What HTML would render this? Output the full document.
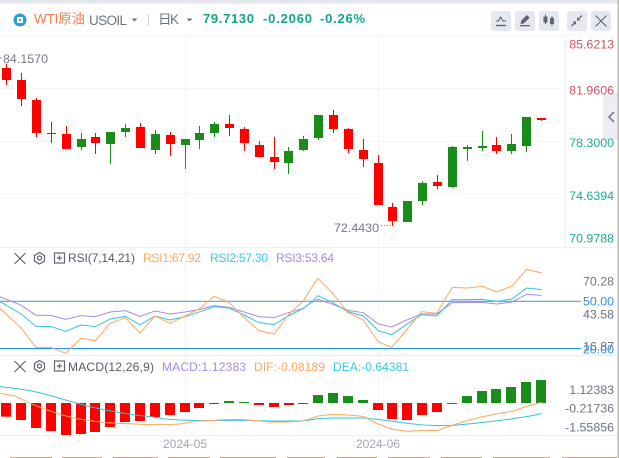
<!DOCTYPE html>
<html><head><meta charset="utf-8"><style>
html,body{margin:0;padding:0;background:#fff;width:619px;height:458px;overflow:hidden}
svg{display:block;font-family:"Liberation Sans","Noto Sans CJK SC",sans-serif}
.g line{stroke:#1a8c1a;stroke-width:1}.g rect{fill:#1a8c1a}
.r line{stroke:#ff0000;stroke-width:1}.r rect{fill:#ff0000}
.ax{font-size:12.4px;text-anchor:end}
.z{vector-effect:non-scaling-stroke;fill:none}
</style></head><body>
<svg width="619" height="458" viewBox="0 0 619 458">
<rect width="619" height="458" fill="#fff"/>
<rect width="619" height="3.5" fill="#e3e7ed"/>
<rect x="617.5" width="1.5" height="458" fill="#b9b6b2"/>
<!-- grid -->
<g stroke="#f4f5f8" stroke-width="1">
<line x1="0" y1="35.5" x2="617" y2="35.5"/>
<line x1="185.5" y1="36" x2="185.5" y2="435"/><line x1="378.5" y1="36" x2="378.5" y2="435"/>
<line x1="0" y1="88.5" x2="565" y2="88.5"/><line x1="0" y1="141.5" x2="565" y2="141.5"/><line x1="0" y1="193.5" x2="565" y2="193.5"/>
</g>
<g stroke="#eef0f3" stroke-width="1">
<line x1="0" y1="247.5" x2="617" y2="247.5"/><line x1="0" y1="355.5" x2="617" y2="355.5"/><line x1="0" y1="435.5" x2="617" y2="435.5"/>
<line x1="565.5" y1="36" x2="565.5" y2="247"/>
</g>
<!-- header -->
<circle cx="20" cy="20" r="6.5" fill="#2b9fc7"/><rect x="17" y="17" width="6" height="6" rx="1" fill="#fff"/><rect x="19" y="19" width="2" height="2" fill="#2b9fc7"/>
<text x="34" y="23.5" font-size="13.5" fill="#ff7a50" textLength="51">WTI原油</text>
<text x="89" y="25" font-size="13.5" fill="#6b7280" textLength="38">USOIL</text>
<path d="M131.500 18.500h6l-3 3z" fill="#6b7280"/>
<rect x="148" y="14" width="1" height="12" fill="#c9ccd4"/>
<text x="158" y="24" font-size="13.500" fill="#6b7280" textLength="21">日K</text>
<path d="M186.500 18.500h6l-3 3z" fill="#6b7280"/>
<g font-size="13" font-weight="bold" fill="#10a58a">
<text x="203" y="23" textLength="51">79.7130</text>
<text x="263" y="23" textLength="49">-0.2060</text>
<text x="320" y="23" textLength="45">-0.26%</text>
</g>
<g fill="#e5e8ef">
<rect x="491" y="11" width="20" height="20" rx="3"/><rect x="515" y="11" width="20" height="20" rx="3"/><rect x="539" y="11" width="20" height="20" rx="3"/><rect x="567" y="11" width="20" height="20" rx="3"/><rect x="591" y="11" width="20" height="20" rx="3"/>
</g>
<!-- toolbar icons -->
<g stroke="#5f6470" fill="none">
<path d="M496 25.500h10" stroke-width="1.400"/>
<path d="M496 21h2.500l2-3.800 2.500 3.800h3" stroke-width="1.100"/>
<path d="M595.500 15.500l11 11M606.500 15.500l-11 11" stroke-width="1.100"/>
<path d="M571.500 26l3-3M582 15.500l-3 3" stroke-width="1.300"/>
</g>
<g fill="#5f6470">
<path d="M576 21.500v3.500l-3.500-3.500zM577 20.500v-3.500l3.500 3.500z"/>
<path d="M520.500 24l.8-3.500 5.700-5.500 2.700 2.700-5.700 5.700z"/>
<rect x="520" y="25" width="10" height="1.300"/>
<rect x="543.500" y="16.500" width="4" height="6"/><rect x="545" y="14.500" width="1" height="9.500"/>
<rect x="550" y="18" width="4" height="6"/><rect x="551.500" y="16" width="1" height="10"/>
</g>
<!-- side handle -->
<rect x="603" y="93" width="14.500" height="47" fill="#eceef3"/>
<path d="M614 112l-5 5 5 5" fill="none" stroke="#6b7280" stroke-width="1.500"/>
<!-- candles -->
<g class="r">
<line x1="6.500" y1="64" x2="6.500" y2="85"/><rect x="2" y="68" width="9" height="12"/>
<line x1="21.500" y1="73" x2="21.500" y2="106"/><rect x="17" y="80" width="9" height="19"/>
<line x1="36.500" y1="98" x2="36.500" y2="137"/><rect x="32" y="100" width="9" height="33"/>
<line x1="51.500" y1="122" x2="51.500" y2="143"/><rect x="47" y="133" width="9" height="1"/>
<line x1="66.500" y1="126" x2="66.500" y2="149"/><rect x="62" y="134" width="9" height="15"/>
<line x1="95.500" y1="133" x2="95.500" y2="154"/><rect x="91" y="137" width="9" height="6"/>
<line x1="140.500" y1="123" x2="140.500" y2="148"/><rect x="136" y="127" width="9" height="21"/>
<line x1="170.500" y1="132" x2="170.500" y2="156"/><rect x="166" y="135" width="9" height="9"/>
<line x1="229.500" y1="115" x2="229.500" y2="136"/><rect x="225" y="124" width="9" height="4"/>
<line x1="244.500" y1="127" x2="244.500" y2="151"/><rect x="240" y="129" width="9" height="14"/>
<line x1="259.500" y1="141" x2="259.500" y2="157"/><rect x="255" y="145" width="9" height="12"/>
<line x1="274.500" y1="137" x2="274.500" y2="169"/><rect x="270" y="157" width="9" height="5"/>
<line x1="333.500" y1="110" x2="333.500" y2="133"/><rect x="329" y="115" width="9" height="14"/>
<line x1="348.500" y1="128" x2="348.500" y2="153"/><rect x="344" y="129" width="9" height="20"/>
<line x1="363.500" y1="139" x2="363.500" y2="167"/><rect x="359" y="150" width="9" height="9"/>
<line x1="378.500" y1="155" x2="378.500" y2="205"/><rect x="374" y="163" width="9" height="42"/>
<line x1="392.500" y1="203" x2="392.500" y2="226"/><rect x="388" y="207" width="9" height="14"/>
<line x1="437.500" y1="175" x2="437.500" y2="189"/><rect x="433" y="182" width="9" height="4"/>
<line x1="496.500" y1="137" x2="496.500" y2="154"/><rect x="492" y="145" width="9" height="6"/>
<line x1="541.500" y1="118" x2="541.500" y2="121"/><rect x="537" y="118" width="9" height="2"/>
</g>
<g class="g">
<line x1="81.500" y1="133" x2="81.500" y2="150"/><rect x="77" y="139" width="9" height="8"/>
<line x1="110.500" y1="132" x2="110.500" y2="164"/><rect x="106" y="132" width="9" height="12"/>
<line x1="125.500" y1="124" x2="125.500" y2="137"/><rect x="121" y="128" width="9" height="4"/>
<line x1="155.500" y1="130" x2="155.500" y2="154"/><rect x="151" y="134" width="9" height="16"/>
<line x1="185.500" y1="139" x2="185.500" y2="169"/><rect x="181" y="139" width="9" height="6"/>
<line x1="199.500" y1="126" x2="199.500" y2="149"/><rect x="195" y="133" width="9" height="7"/>
<line x1="214.500" y1="122" x2="214.500" y2="137"/><rect x="210" y="124" width="9" height="9"/>
<line x1="288.500" y1="147" x2="288.500" y2="174"/><rect x="284" y="151" width="9" height="12"/>
<line x1="303.500" y1="136" x2="303.500" y2="151"/><rect x="299" y="139" width="9" height="11"/>
<line x1="318.500" y1="115" x2="318.500" y2="140"/><rect x="314" y="115" width="9" height="23"/>
<rect x="403" y="201" width="9" height="21"/>
<line x1="422.500" y1="181" x2="422.500" y2="205"/><rect x="418" y="183" width="9" height="18"/>
<line x1="452.500" y1="146" x2="452.500" y2="188"/><rect x="448" y="147" width="9" height="40"/>
<line x1="467.500" y1="145" x2="467.500" y2="161"/><rect x="463" y="147" width="9" height="2"/>
<line x1="482.500" y1="131" x2="482.500" y2="151"/><rect x="478" y="146" width="9" height="2"/>
<line x1="511.500" y1="134" x2="511.500" y2="154"/><rect x="507" y="144" width="9" height="7"/>
<line x1="526.500" y1="117" x2="526.500" y2="152"/><rect x="522" y="117" width="9" height="29"/>
</g>
<rect x="0.500" y="57" width="1" height="2" fill="#888"/>
<text x="3" y="63" font-size="12.400" fill="#777a85" textLength="45">84.1570</text>
<text x="334" y="232" font-size="12.400" fill="#777a85" textLength="45">72.4430</text>
<line x1="381" y1="225.500" x2="392" y2="225.500" stroke="#888" stroke-width="1" stroke-dasharray="1 2"/>
<!-- axis -->
<g class="ax" fill="#d9505f"><text x="614" y="48.500">85.6213</text><text x="614" y="94.500">81.9606</text></g>
<g class="ax" fill="#1fa88f"><text x="614" y="147">78.3000</text><text x="614" y="200">74.6394</text><text x="614" y="242.500">70.9788</text></g>
<g class="ax" fill="#6b7280"><text x="614" y="285.500">70.28</text><text x="614" y="318.500">43.58</text><text x="614" y="350.500">16.87</text><text x="614" y="394">1.12383</text><text x="614" y="412.500">-0.21736</text><text x="614" y="431.500">-1.55856</text></g>
<g class="ax" fill="#2f8fe8"><text x="614" y="305.500">50.00</text><text x="614" y="353.500">20.00</text></g>
<!-- RSI -->
<g stroke="#5f6470" stroke-width="1.200" fill="none">
<path d="M14.500 253l11 11M25.500 253l-11 11M14.500 361l11 11M25.500 361l-11 11"/>
<path d="M39.500 252.500l5 3v5.500l-5 3-5-3v-5.500z"/><circle cx="39.500" cy="258" r="2"/>
<path d="M39.500 360.500l5 3v5.500l-5 3-5-3v-5.500z"/><circle cx="39.500" cy="366" r="2"/>
<rect x="54.500" y="253" width="10" height="10"/><path d="M57 258h5M59.500 255.500v5"/>
<rect x="54.500" y="361" width="10" height="10"/><path d="M57 366h5M59.500 363.500v5"/>
</g>
<g font-size="12">
<text x="68" y="262" fill="#555a66" textLength="67">RSI(7,14,21)</text>
<text x="143" y="262" fill="#ffa65c" textLength="58">RSI1:67.92</text>
<text x="210" y="262" fill="#3cc8e0" textLength="58">RSI2:57.30</text>
<text x="276" y="262" fill="#a78be8" textLength="58">RSI3:53.64</text>
<text x="68" y="371" fill="#555a66" textLength="86">MACD(12,26,9)</text>
<text x="162" y="371" fill="#a78be8" textLength="84">MACD:1.12383</text>
<text x="254" y="371" fill="#ffa65c" textLength="71">DIF:-0.08189</text>
<text x="333" y="371" fill="#3cc8e0" textLength="76">DEA:-0.64381</text>
</g>
<line x1="0" y1="301.300" x2="581" y2="301.300" stroke="#4aa3ee" stroke-width="1.200"/>
<line x1="0" y1="348.500" x2="581" y2="348.500" stroke="#1e90ff" stroke-width="1"/>
<g transform="translate(0,240) scale(0.33333)">
<polyline class="z" stroke="#a78be8" stroke-width="1" points="0,170 64,196 108,226 152,226 197,238 243,227 286,230 331,216 376,212 420,229 465,213 510,222 555,216 600,208 642,197 687,202 732,216 777,230 822,233 865,218 910,205 930,190 954,178 998,193 1044,211 1090,218 1135,252 1175,261 1220,240 1265,222 1310,222 1357,188 1402,188 1447,187 1490,192 1535,186 1580,163 1625,166"/>
<polyline class="z" stroke="#35c4dc" stroke-width="1" points="0,185 64,222 108,259 152,259 197,274 243,255 286,260 331,237 376,229 420,254 465,228 510,240 555,230 600,215 642,200 687,204 732,225 777,248 822,254 865,228 910,205 930,190 954,167 998,188 1044,215 1090,228 1135,272 1175,284 1220,253 1265,224 1310,228 1357,179 1402,179 1447,178 1490,184 1535,177 1580,144 1625,149"/>
<polyline class="z" stroke="#ffa65c" stroke-width="1" points="0,205 64,265 108,322 152,322 197,340 243,295 286,302 331,250 376,233 420,279 465,228 510,250 555,228 600,205 642,169 687,187 732,232 777,272 822,282 865,225 910,183 930,150 954,115 998,160 1044,218 1090,240 1135,306 1175,322 1220,270 1265,215 1310,220 1357,142 1402,144 1447,139 1490,156 1535,139 1580,88 1625,99"/>
</g>
<!-- MACD bars -->
<g transform="translate(0,350) scale(0.33333)">
<g fill="#ff0000">
<rect x="3" y="159" width="30" height="41"/><rect x="48" y="159" width="30" height="51"/><rect x="93" y="159" width="30" height="75"/><rect x="138" y="159" width="30" height="84"/><rect x="183" y="159" width="30" height="96"/><rect x="228" y="159" width="30" height="93"/><rect x="270" y="159" width="30" height="87"/><rect x="315" y="159" width="30" height="72"/><rect x="360" y="159" width="30" height="57"/><rect x="405" y="159" width="30" height="54"/><rect x="450" y="159" width="30" height="42"/><rect x="495" y="159" width="30" height="36"/><rect x="540" y="159" width="30" height="27"/><rect x="582" y="159" width="30" height="15"/><rect x="627" y="159" width="30" height="3"/><rect x="762" y="159" width="30" height="6"/><rect x="807" y="159" width="30" height="12"/><rect x="852" y="159" width="30" height="6"/>
<rect x="1119" y="159" width="30" height="21"/><rect x="1161" y="159" width="30" height="48"/><rect x="1206" y="159" width="30" height="51"/><rect x="1251" y="159" width="30" height="36"/><rect x="1296" y="159" width="30" height="27"/>
</g>
<g fill="#1a8c1a">
<rect x="672" y="153" width="30" height="6"/><rect x="717" y="156" width="30" height="3"/><rect x="894" y="159" width="30" height="3"/>
<rect x="939" y="135" width="30" height="24"/><rect x="984" y="129" width="30" height="30"/><rect x="1029" y="138" width="30" height="21"/><rect x="1074" y="150" width="30" height="9"/>
<rect x="1341" y="159" width="30" height="3"/><rect x="1386" y="138" width="30" height="21"/><rect x="1431" y="123" width="30" height="36"/><rect x="1473" y="117" width="30" height="42"/><rect x="1518" y="111" width="30" height="48"/><rect x="1563" y="96" width="30" height="63"/><rect x="1608" y="90" width="30" height="69"/>
</g>
<polyline class="z" stroke="#35c4dc" stroke-width="1" points="0,110 45,115 90,122 135,132 180,145 225,158 270,170 315,180 360,188 405,195 450,200 495,207 540,210 585,212 630,212 675,211 720,211 765,212 810,213 855,213 900,213 930,210 954,206 999,204 1044,204 1089,204 1134,208 1179,214 1224,220 1269,225 1314,227 1359,226 1404,222 1449,217 1494,212 1539,206 1584,199 1625,191"/>
<polyline class="z" stroke="#ffa65c" stroke-width="1" points="0,130 45,138 90,160 135,178 180,193 225,205 270,212 315,218 360,220 405,222 450,224 495,224 540,222 585,214 630,212 675,209 720,208 765,212 810,216 855,216 900,214 930,207 954,198 999,193 1044,195 1089,199 1134,222 1179,238 1224,244 1269,241 1314,241 1359,225 1404,211 1449,200 1494,191 1539,183 1584,168 1625,157"/>
</g>
<!-- dates -->
<g font-size="12" fill="#a3a6b3" text-anchor="middle"><text x="185" y="448">2024-05</text><text x="378" y="448">2024-06</text></g>
<!-- bottom strip -->
<g fill="#cfa273">
<rect x="10" y="457" width="42" height="1"/><rect x="62" y="457" width="40" height="1"/><rect x="113" y="457" width="45" height="1"/><rect x="168" y="457" width="42" height="1"/><rect x="220" y="457" width="56" height="1"/><rect x="287" y="457" width="38" height="1"/><rect x="337" y="457" width="40" height="1"/><rect x="388" y="457" width="42" height="1"/><rect x="441" y="457" width="41" height="1"/><rect x="493" y="457" width="57" height="1"/><rect x="562" y="457" width="55" height="1"/>
</g>
</svg>
</body></html>
